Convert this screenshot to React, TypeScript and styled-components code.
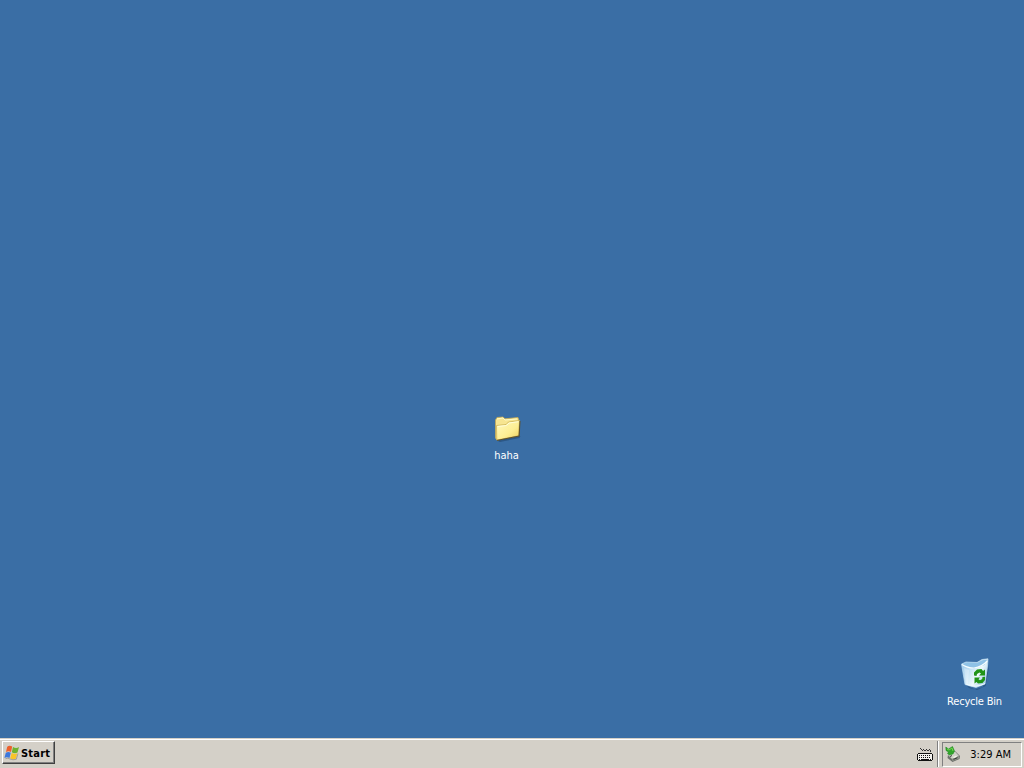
import React from "react";
import styled, { createGlobalStyle } from "styled-components";

const Global = createGlobalStyle`
  * { box-sizing: border-box; }
  body { margin: 0; overflow: hidden; }
`;

const Screen = styled.div`
  display: flex;
  flex-direction: column;
  width: 1024px;
  height: 768px;
  font-family: "DejaVu Sans Condensed", "DejaVu Sans", sans-serif;
  font-stretch: condensed;
  font-size: 11px;
  line-height: 13px;
  cursor: default;
`;

const Desktop = styled.main`
  position: relative;
  flex: 1;
  background: #3a6ea5;
`;

const Shortcut = styled.div<{ $x: number; $y: number }>`
  position: absolute;
  left: ${(p) => p.$x}px;
  top: ${(p) => p.$y}px;
  width: 75px;
  display: flex;
  flex-direction: column;
  align-items: center;
  gap: 5px;
`;

const Label = styled.span<{ $spacing: number }>`
  color: #fff;
  white-space: nowrap;
  letter-spacing: ${(p) => p.$spacing}px;
`;

const Taskbar = styled.footer`
  display: flex;
  align-items: flex-start;
  height: 30px;
  padding: 2px 2px 2px 2px;
  background: #d4d0c8;
  border-top: 1px solid #d4d0c8;
  box-shadow: inset 0 1px #fff;
`;

const StartButton = styled.button`
  display: flex;
  align-items: center;
  gap: 1px;
  width: 53px;
  height: 23px;
  padding: 1px 0 0 1px;
  border: 1px solid;
  border-color: #fff #404040 #404040 #fff;
  box-shadow: inset -1px -1px #808080;
  background: #d4d0c8;
  color: #000;
  font: bold 11px/13px "DejaVu Sans Condensed", "DejaVu Sans", sans-serif;
  font-stretch: condensed;
  letter-spacing: 0.2px;
`;

const Status = styled.div`
  display: flex;
  align-items: flex-start;
  margin-left: auto;
`;

const KeyboardButton = styled.div`
  padding: 6px 4px 0 0;
  height: 25px;
`;

const Divider = styled.div`
  width: 2px;
  height: 26px;
  margin-right: 3px;
  border-left: 1px solid #808080;
  border-right: 1px solid #fff;
`;

const Tray = styled.div`
  display: flex;
  align-items: center;
  justify-content: space-between;
  width: 80px;
  height: 25px;
  margin-top: 1px;
  padding: 0 10px 0 2px;
  border: 1px solid;
  border-color: #808080 #fff #fff #808080;
`;

const TrayIcon = styled.span`
  display: flex;
  padding-bottom: 2px;
`;

const Clock = styled.time`
  color: #000;
  white-space: nowrap;
  letter-spacing: 0;
`;

const Folder = () => (
  <svg width="32" height="32" viewBox="0 0 32 32">
    <defs>
      <linearGradient id="front" x1="0" y1="0" x2="1" y2="1">
        <stop offset="0" stopColor="#fffac0" />
        <stop offset=".6" stopColor="#fdee92" />
        <stop offset="1" stopColor="#ecce5c" />
      </linearGradient>
    </defs>
    <path d="M6 28.5 28 24 29.5 24 28.5 26 9 30Z" fill="#1d3f68" opacity=".5" />
    <path d="M4.5 8 6 5.5 12 5 14 6.8 27 5.5 28 9 27 22 6 28 4.5 26Z" fill="#f7e591" stroke="#c4a955" strokeWidth=".8" />
    <path d="M6 7 12 6 14 8 26 7" fill="none" stroke="#fffac5" />
    <path d="M5.5 13.5 15 12.5 17.5 10 28.5 8.5 27.5 23.8 5.8 28Z" fill="url(#front)" stroke="#c7aa4c" strokeWidth=".7" />
    <path d="M6.5 14.5 15.5 13.5 18 11 27.5 9.7" fill="none" stroke="#fffdd8" />
    <path d="M6 28.4 28.2 24 29 9" fill="none" stroke="#5b4c24" strokeWidth=".9" />
  </svg>
);

const RecycleBin = () => (
  <svg width="32" height="32" viewBox="0 0 32 32">
    <defs>
      <linearGradient id="glass" x1="0" y1="0" x2="1" y2=".6">
        <stop offset="0" stopColor="#8fc2e8" />
        <stop offset=".4" stopColor="#c4e2f5" />
        <stop offset=".7" stopColor="#eef9fc" />
        <stop offset="1" stopColor="#a6cee9" />
      </linearGradient>
    </defs>
    <path d="M8 28 16 31.5 24 29 30 7 29.5 12 26.5 28 18 32 10 30Z" fill="#234a76" opacity=".65" />
    <path d="M2.5 6 7 4 18 4.5 23 1.5 29 .8 28.5 8 26 26 17 29.5 6 26.5Z" fill="url(#glass)" stroke="#c2e0f3" strokeWidth=".7" />
    <path d="M3.5 6.5 8 4.5 18 5 23 2.2 28.5 1.5 25.5 7 15 10.5Z" fill="#8fc2e6" />
    <path d="M3 6.5Q8 10 15 10 23 9 28.2 3" fill="none" stroke="#f6fdff" strokeWidth="1.2" />
    <path d="M5 10 10 12 9 26 7 25Z" fill="#fff" opacity=".3" />
    <path d="M7 26Q16 30.5 26 25.5" fill="none" stroke="#eefaff" />
    <g fill="#209317">
      <path d="M15 17.5V14.5L18 11.5 22.5 11 24 13 26 11.5V17.5H20L22 15.5 20.5 14.5 18 16 17.5 18Z" />
      <path d="M26 18.8V22L23.5 25 19 25.5 17.5 24 15.5 25.5V19.5H21L19.5 21.3 21 22.3 23.2 21 23.5 19Z" />
    </g>
  </svg>
);

const WindowsFlag = () => (
  <svg width="16" height="16" viewBox="0 0 16 16">
    <path d="M3.2 1.7Q5.5 0 8.2 1.6L7 7Q4.7 5.7 2 7Z" fill="#ed602c" />
    <path d="M9 1.9Q12 3.8 15 2L13.5 7.6Q10.5 8.8 7.8 7.3Z" fill="#6eb22f" />
    <path d="M1.8 7.8Q4.4 6.4 6.8 7.8L5.5 13Q2.9 11.7.4 13Z" fill="#3d78dc" />
    <path d="M7.6 8.1Q10.3 9.6 13.3 8.3L11.8 13.8Q9 14.9 6.2 13.3Z" fill="#f9c429" />
    <path d="M1.5 13.7Q4 12.5 6 14 9 15.4 12.3 14.3L14 8.5" fill="none" stroke="#736f68" strokeWidth=".7" opacity=".7" />
  </svg>
);

const Keyboard = () => (
  <svg width="16" height="16" viewBox="0 0 16 16" shapeRendering="crispEdges">
    <path d="M3 1h1v1h1v1H4V2H3ZM5 3h1V2h1v1h1v1H7V3H6v1H5ZM8 3h1V2h1v1h1v1h-1V3H9v1H8ZM11 3h1V2h1v1h1v2h-1V3h-1v1h-1Z" fill="#333" />
    <path d="M1 6h14v1h1v6h-1v1H1v-1H0V7h1Z" fill="#111" />
    <path d="M1 7h14v6H1Z" fill="#f3f1ed" />
    <path d="M2 8.5h12M2 10.5h12" stroke="#111" strokeDasharray="1 1" />
    <path d="M2 12.5h1M4 12.5h8M13 12.5h1" stroke="#111" />
  </svg>
);

const RemoveHardware = () => (
  <svg width="16" height="16" viewBox="0 0 16 16">
    <path d="m3 9 7-4 5 5-.5 3-7 3-5-4Z" fill="#6d706b" />
    <path d="m3 9 7-3.5 4 4.5-7 3Z" fill="#d0d2c8" />
    <path d="m7 13 7-3v2.5L7.5 15Z" fill="#92968c" />
    <path d="m5 9 2-1 1 1-2 1ZM8 11l3-1.3 1 1-3 1.2Z" fill="#f5f5eb" />
    <path d="m5 10.5 2-1M8.5 13.4l4-1.7" stroke="#343834" />
    <path d="M.8 1 3.5 3 7.5.5 9.5 5 8 8 4.5 9 2.5 7.5 3.5 6 1 4.5Z" fill="#32a52b" stroke="#16821b" strokeWidth=".5" />
    <path d="m2 3 2 1 3-2 1 3" fill="none" stroke="#71d550" />
  </svg>
);

export default function App() {
  return (
    <Screen>
      <Global />
      <Desktop>
        <Shortcut $x={469} $y={412}>
          <Folder />
          <Label $spacing={0}>haha</Label>
        </Shortcut>
        <Shortcut $x={937} $y={658}>
          <RecycleBin />
          <Label $spacing={-0.2}>Recycle Bin</Label>
        </Shortcut>
      </Desktop>
      <Taskbar>
        <StartButton>
          <WindowsFlag />
          Start
        </StartButton>
        <Status>
          <KeyboardButton>
            <Keyboard />
          </KeyboardButton>
          <Divider />
          <Tray>
            <TrayIcon>
              <RemoveHardware />
            </TrayIcon>
            <Clock>3:29 AM</Clock>
          </Tray>
        </Status>
      </Taskbar>
    </Screen>
  );
}
